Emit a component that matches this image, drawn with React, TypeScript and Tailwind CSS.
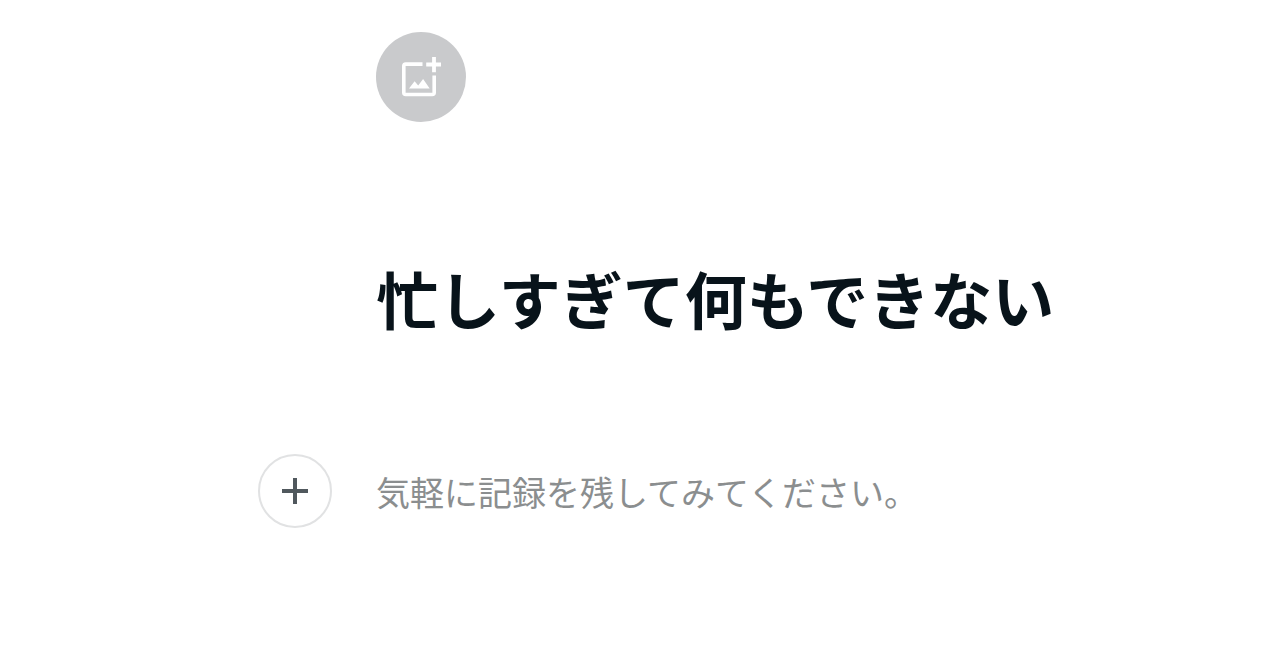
import { useState } from "react";

const AddPhotoIcon = () => (
  <svg viewBox="0 0 40 40" className="w-10 h-10" fill="none" aria-hidden="true">
    <path
      d="M21.5 7.1H4.8a2 2 0 0 0-2 2v26.4a2 2 0 0 0 2 2h26.4a2 2 0 0 0 2-2V18.5"
      stroke="currentColor"
      strokeWidth="3.6"
    />
    <path d="M33 0v15.2M25.2 7.5H40" stroke="currentColor" strokeWidth="3.8" />
    <path d="M8 31.4l5.6-7.2 3.6 4.4 4.9-6.6 6.6 9.4z" fill="currentColor" />
  </svg>
);

const PlusIcon = () => (
  <svg viewBox="0 0 26 26" className="w-[26px] h-[26px]" fill="none" aria-hidden="true">
    <path d="M13 0v26M0 13h26" stroke="currentColor" strokeWidth="4" />
  </svg>
);

export default function App() {
  const [title, setTitle] = useState("忙しすぎて何もできない");
  const [body, setBody] = useState("");

  return (
    <main className="min-h-screen bg-white pt-8 pl-[258px] pr-8 font-['Noto_Sans_CJK_JP',sans-serif]">
      <div className="grid grid-cols-[74px_1fr] gap-x-11 items-center">
        <button
          type="button"
          aria-label="画像を追加"
          className="col-start-2 w-[90px] h-[90px] rounded-full bg-[#c9cacc] text-white flex items-center justify-center"
        >
          <AddPhotoIcon />
        </button>

        <input
          type="text"
          aria-label="タイトル"
          value={title}
          onChange={(e) => setTitle(e.target.value)}
          className="col-start-2 w-full mt-32 h-24 text-[62px] font-bold text-[#08131a] outline-none"
        />

        <button
          type="button"
          aria-label="ブロックを追加"
          className="mt-[108px] w-[74px] h-[74px] rounded-full border-2 border-[#e1e2e3] bg-white text-[#50585d] flex items-center justify-center"
        >
          <PlusIcon />
        </button>
        <input
          type="text"
          aria-label="本文"
          placeholder="気軽に記録を残してみてください。"
          value={body}
          onChange={(e) => setBody(e.target.value)}
          className="mt-[108px] w-full h-14 text-[34px] text-[#08131a] placeholder:text-[#8b8e8f] outline-none"
        />
      </div>
    </main>
  );
}
